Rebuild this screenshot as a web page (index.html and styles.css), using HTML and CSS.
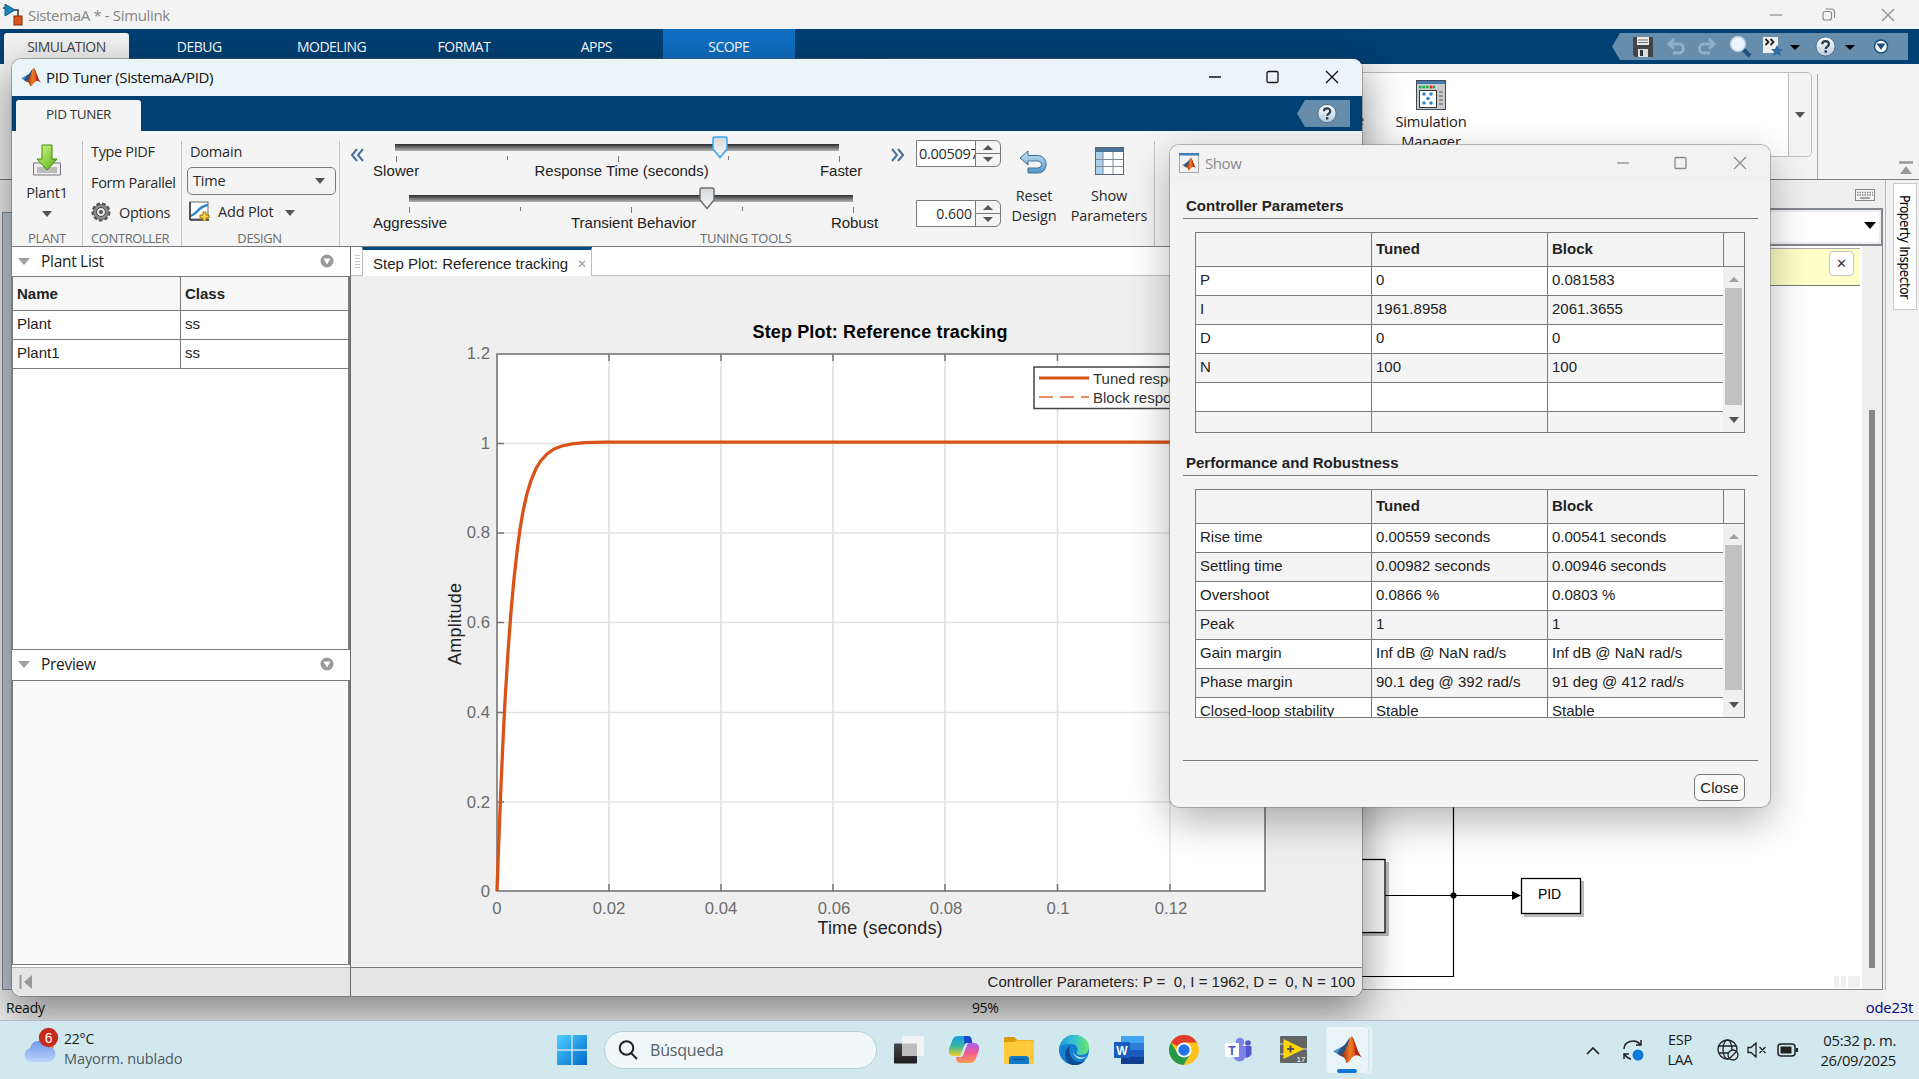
FILE: index.html
```html
<!DOCTYPE html>
<html lang="en">
<head>
<meta charset="utf-8">
<title>SistemaA * - Simulink</title>
<link rel="stylesheet" href="styles.css">
</head>
<body>
<svg class="defs" aria-hidden="true">
  <defs>
    <linearGradient id="flame" x1="0" y1="0" x2="1" y2="0"><stop offset="0" stop-color="#7a1a10"/><stop offset=".45" stop-color="#f07a20"/><stop offset="1" stop-color="#c02818"/></linearGradient>
    <linearGradient id="winblue" x1="0" y1="0" x2="1" y2="1"><stop offset="0" stop-color="#4fd0ff"/><stop offset="1" stop-color="#0068cc"/></linearGradient>
    <linearGradient id="track" x1="0" y1="0" x2="0" y2="1"><stop offset="0" stop-color="#2c2c2c"/><stop offset="1" stop-color="#b4b4b4"/></linearGradient>
    <linearGradient id="thumb" x1="0" y1="0" x2="0" y2="1"><stop offset="0" stop-color="#d4d6d8"/><stop offset="1" stop-color="#fafafa"/></linearGradient>
    <linearGradient id="green" x1="0" y1="0" x2="1" y2="1"><stop offset="0" stop-color="#d6ff8c"/><stop offset="1" stop-color="#58a818"/></linearGradient>
    <linearGradient id="undo" x1="0" y1="0" x2="0" y2="1"><stop offset="0" stop-color="#c8e6f6"/><stop offset="1" stop-color="#4f95c4"/></linearGradient>
    <linearGradient id="ball" x1="0" y1="0" x2="0" y2="1"><stop offset="0" stop-color="#fff"/><stop offset="1" stop-color="#b9cbdc"/></linearGradient>
    <linearGradient id="edge1" x1="0" y1="0" x2="1" y2="0"><stop offset="0" stop-color="#1d9de0"/><stop offset=".5" stop-color="#35c4cf"/><stop offset="1" stop-color="#6ae86a"/></linearGradient>
    <linearGradient id="cop" x1="0" y1="0" x2="0" y2="1"><stop offset="0" stop-color="#1a9fe8"/><stop offset=".5" stop-color="#35b6a0"/><stop offset="1" stop-color="#f0d020"/></linearGradient>
    <linearGradient id="cop2" x1="0" y1="0" x2="0" y2="1"><stop offset="0" stop-color="#a860f0"/><stop offset=".5" stop-color="#f05a90"/><stop offset="1" stop-color="#ff9a50"/></linearGradient>
    <linearGradient id="cloud" x1="0" y1="0" x2="0" y2="1"><stop offset="0" stop-color="#6f97ea"/><stop offset="1" stop-color="#bcd4fb"/></linearGradient>
    <linearGradient id="dark" x1="0" y1="0" x2="0" y2="1"><stop offset="0" stop-color="#484848"/><stop offset="1" stop-color="#1c1c1c"/></linearGradient>
    <symbol id="matlab" viewBox="0 0 32 32">
      <path d="M0 18 L9 13.500 L14 17 L8 23 Z" fill="#4a8fce"/>
      <path d="M9 13.500 C13 12 15 8 19 2 L16 14 L11 21 L8 23 L5 20.500 Z" fill="#27507e"/>
      <path d="M20.500 1 C24 5 26 18 32 25 C27 21 24 22 21 25 C18 29 17 30 14.500 31 C14 26 12 24 8 23 C14 20 16 8 20.500 1 Z" fill="url(#flame)"/>
      <path d="M21 1 C24 5 26 18 32 25 C29 22 26.500 21.500 24.500 22.500 C24 14 22.500 7 21 1 Z" fill="#b82a18"/>
    </symbol>
    <symbol id="help" viewBox="0 0 22 22"><circle cx="11" cy="11" r="10" fill="url(#ball)" stroke="#4e6f8c"/><path d="M7.600 8.600 C7.600 4.200 14.600 4.200 14.600 8.400 C14.600 11 11.400 11 11.200 13.600" fill="none" stroke="#2b3c50" stroke-width="2.400"/><rect x="9.900" y="15" width="2.600" height="2.600" fill="#2b3c50"/></symbol>
    <symbol id="arrowback" viewBox="0 0 28 24"><path d="M9 1 L1 8 L9 15 L9 11 L18 11 C24 11 24 18 18 18 L9 18 L9 23 L19 23 C30 23 30 5 18 5.500 L9 5.500 Z" fill="url(#undo)" stroke="#3d7098"/></symbol>
  </defs>
</svg>

<div class="desktop">

  <!-- Simulink main window -->
  <section class="simulink">
    <header class="sl-title">
      <svg class="sl-logo" viewBox="0 0 20 22"><path d="M0 4h3M10 6h5v6" fill="none" stroke="#333" stroke-width="1.500"/><path d="M2 0L12 6L2 12Z" fill="#1d83bd" stroke="#17628e"/><rect x="11" y="12" width="8" height="9" fill="#d9541e" stroke="#8a2c08"/></svg>
      <span>SistemaA * - Simulink</span>
      <svg class="sl-winbtns" viewBox="0 0 130 20" fill="none" stroke="#8a8a8a" stroke-width="1.200"><path d="M0 10h12"/><rect x="53" y="6.500" width="8.500" height="8.500" rx="2"/><path d="M55.500 4h6a3 3 0 0 1 3 3v6"/><path d="M112 4l12 12M124 4l-12 12"/></svg>
    </header>
    <nav class="sl-tabs">
      <span class="sl-tab active">SIMULATION</span><span class="sl-tab">DEBUG</span><span class="sl-tab">MODELING</span><span class="sl-tab">FORMAT</span><span class="sl-tab">APPS</span><span class="sl-tab scope">SCOPE</span>
      <svg class="quick" viewBox="0 0 296 27">
        <path d="M8 0H296V27H8L0 13.500Z" fill="#678dad"/>
        <g transform="translate(21 4)"><path d="M0 0h20v20h-18l-2-2z" fill="#444"/><rect x="4" y="0" width="12" height="8" fill="#e9e9e9"/><path d="M5 3h10M5 5.500h10" stroke="#777"/><rect x="5" y="12" width="10" height="8" fill="#ddd"/><rect x="7" y="13" width="3" height="6" fill="#333"/></g>
        <g fill="none" stroke="#8fb0cb" stroke-width="3"><path d="M57 11h10a4 4 0 0 1 0 9h-6M62 6l-5 5 5 5"/><path d="M102 11h-10a4 4 0 0 0 0 9h6M97 6l5 5-5 5"/></g>
        <path d="M130 15l8 8" stroke="#1f4f7e" stroke-width="4"/><circle cx="126" cy="11" r="7.500" fill="#eaf5fd" stroke="#b4cbdc" stroke-width="1.500"/>
        <rect x="151" y="4" width="15" height="16" fill="#f0f0f0"/><path d="M153.500 6l3 3-3 3M158.500 6l3 3-3 3" stroke="#222" stroke-width="1.800" fill="none"/><path d="M165 12l2 4h4l-3 3 1 4-4-2-4 2 1-4-3-3h4z" fill="#2f6ca6"/>
        <path d="M178 12h10l-5 5zM233 12h10l-5 5z" fill="#000"/>
        <use href="#help" x="203" y="3" width="21" height="21"/>
        <circle cx="269" cy="13.500" r="6.500" fill="#fff" stroke="#164f80" stroke-width="1.500"/><path d="M264.500 10.500h9l-4.500 6.500z" fill="#164f80"/>
      </svg>
    </nav>
    <div class="sl-strip">
      <div class="gallery">
        <span class="gallery-prev">e</span>
        <div class="simman">
          <svg viewBox="0 0 30 30" width="30" height="30"><rect x=".5" y=".5" width="29" height="29" fill="#c9ccce" stroke="#3c4a58"/><rect x="1" y="1" width="28" height="3" fill="#4577a8"/><path d="M3 7h16" stroke="#10b43c" stroke-width="2.500" stroke-dasharray="2.500 1"/><path d="M14 7h2.500" stroke="#f02020" stroke-width="2.500"/><rect x="3.500" y="10.500" width="17" height="17" fill="#fff" stroke="#333"/><g fill="#2c86c8"><circle cx="8" cy="14" r="1.800"/><circle cx="15" cy="14" r="1.800"/><circle cx="12" cy="18.500" r="1.800"/><circle cx="8" cy="23" r="1.800"/><circle cx="15" cy="23" r="1.800"/></g><path d="M23 12h4M23 16h4M23 20h4M23 24h4" stroke="#555"/></svg>
          <span>Simulation<br>Manager</span>
        </div>
        <span class="gallery-more"><i class="caret"></i></span>
      </div>
      <div class="strip-tail"><svg viewBox="0 0 14 14" width="14" height="14"><path d="M0 1.500h14" stroke="#999" stroke-width="2.500"/><path d="M7 5l6 8H1z" fill="#999"/></svg></div>
    </div>
    <div class="sl-body">
      <div class="sl-left"></div>
      <div class="sl-editor">
        <div class="kbd"><svg viewBox="0 0 20 12" width="20" height="12"><rect x=".5" y=".5" width="19" height="11" fill="#f4f4f4" stroke="#888"/><path d="M2 3.500h16M2 6h16" stroke="#888" stroke-width="1.500" stroke-dasharray="1.500 1"/><path d="M5 9h10" stroke="#888" stroke-width="1.500"/></svg></div>
        <div class="combo"><i class="caret black"></i></div>
        <div class="canvas-row">
          <div class="canvas">
            <div class="notice"><button class="x">✕</button></div>
            <svg class="diagram" viewBox="1340 285 522 703" width="522" height="703">
              <g fill="#777" opacity=".5"><path d="M1340 932h48v3h-48zM1386 861h3v74h-3zM1524 913h60v3h-60zM1581 880h3v36h-3z"/></g>
              <rect x="1330" y="858.500" width="55" height="73" fill="#fff" stroke="#000" stroke-width="1.300"/>
              <rect x="1521.500" y="877.500" width="59" height="35" fill="#fff" stroke="#000" stroke-width="1.300"/>
              <path d="M1385 894.500H1514M1453.500 780V975.500H1340" fill="none" stroke="#000" stroke-width="1.200"/>
              <circle cx="1453.500" cy="894.500" r="3"/><path d="M1512 890l9 4.500-9 4.500z"/>
              <text x="1538" y="898" font-size="14" textLength="23">PID</text>
              <g fill="#f0f0f0"><path d="M1834 975h5v12h-5zM1841 975h5v12h-5zM1848 975h12v12h-12z"/></g>
            </svg>
          </div>
          <div class="vscroll"><span></span></div>
        </div>
      </div>
      <div class="sl-right"><span class="inspector">Property Inspector</span></div>
    </div>
    <footer class="sl-status"><span>Ready</span><span class="zoomlvl">95%</span><span class="solver">ode23t</span></footer>
  </section>

  <!-- PID Tuner window -->
  <section class="tuner">
    <header class="t-title">
      <svg width="20" height="22"><use href="#matlab" width="20" height="22"/></svg>
      <span>PID Tuner (SistemaA/PID)</span>
      <svg class="t-winbtns" viewBox="0 0 130 20" fill="none" stroke="#111" stroke-width="1.300"><path d="M0 10h12"/><rect x="58" y="4.500" width="11" height="11" rx="1.500"/><path d="M117 4l12 12M129 4l-12 12"/></svg>
    </header>
    <nav class="t-tabs"><span>PID TUNER</span>
      <svg viewBox="0 0 53 27" width="53" height="27"><path d="M8 0H53V27H8L0 13.500Z" fill="#678dad"/><use href="#help" x="20" y="3" width="20" height="21"/></svg>
    </nav>
    <div class="toolstrip">
      <div class="grp plant">
        <svg viewBox="0 0 28 32" width="28" height="32"><path d="M.5 19h27v12H.5z" fill="#eee" stroke="#777"/><rect x="4" y="23" width="20" height="6" fill="#bbb"/><path d="M9 1h10v14h5L14 26 4 15h5z" fill="url(#green)" stroke="#3f8a10"/></svg>
        <span>Plant1</span><i class="caret"></i><em>PLANT</em>
      </div>
      <div class="grp ctrl">
        <span>Type PIDF</span><span>Form Parallel</span>
        <span class="opt"><svg viewBox="0 0 20 20" width="20" height="20"><circle cx="10" cy="10" r="8" fill="#777" stroke="#555" stroke-width="3" stroke-dasharray="3.500 2"/><circle cx="10" cy="10" r="7" fill="#8c8c8c"/><circle cx="10" cy="10" r="4.500" fill="#e8e8e8" stroke="#444"/><circle cx="10" cy="10" r="2" fill="#555"/></svg>Options</span>
        <em>CONTROLLER</em>
      </div>
      <div class="grp design">
        <span>Domain</span><span class="select">Time<i class="caret"></i></span>
        <span class="opt"><svg viewBox="0 0 21 20" width="21" height="20"><rect x="1" y="1" width="18" height="17" fill="#fff" stroke="#666"/><path d="M1 15C8 14 9 5 19 4" fill="none" stroke="#2b86c8" stroke-width="2.500"/><path d="M1 19h19M1 1v18" stroke="#333" stroke-width="1.500"/><path d="M14 11h3v3h3v3h-3v3h-3v-3h-3v-3h3z" fill="#ffd23c" stroke="#9a7412"/></svg>Add Plot<i class="caret"></i></span>
        <em>DESIGN</em>
      </div>
      <div class="grp tuning">
        <svg viewBox="341 131 575 114" width="575" height="114" class="sliders">
          <g fill="none" stroke="#46719c" stroke-width="2"><path d="M358 149l-5 6 5 6M364 149l-5 6 5 6M893 149l5 6-5 6M899 149l5 6-5 6"/></g>
          <rect x="396" y="144" width="444" height="7" fill="url(#track)"/><rect x="410" y="195" width="444" height="7" fill="url(#track)"/>
          <path d="M397.500 156v6M508.500 156v4M619.500 156v6M729.500 156v4M840.500 156v6M410.500 207v6M521.500 207v4M632.500 207v6M743.500 207v4M854.500 207v6" stroke="#777"/>
          <path d="M716 137h10q2 0 2 2v10l-7 8.500-7-8.500v-10q0-2 2-2z" fill="url(#thumb)" stroke="#34a4f4" stroke-width="1.500"/>
          <path d="M703 188h10q2 0 2 2v10l-7 8.500-7-8.500v-10q0-2 2-2z" fill="url(#thumb)" stroke="#6c7074" stroke-width="1.500"/>
          <g class="sl-lab"><text x="374" y="176" textLength="46">Slower</text><text x="535.500" y="176" textLength="174">Response Time (seconds)</text><text x="821" y="176" textLength="42">Faster</text>
          <text x="374" y="228" textLength="74">Aggressive</text><text x="572" y="228" textLength="125">Transient Behavior</text><text x="832" y="228" textLength="47">Robust</text></g>
        </svg>
        <div class="spins"><div class="spin"><b>0.005097</b><i></i></div><div class="spin r"><b>0.600</b><i></i></div></div>
        <div class="big"><svg width="30" height="25"><use href="#arrowback" width="28" height="24"/></svg><span>Reset<br>Design</span></div>
        <div class="big show"><svg viewBox="0 0 29 28" width="29" height="28"><rect x=".5" y=".5" width="28" height="27" fill="#fff" stroke="#5a6672"/><rect x="1" y="1" width="27" height="4" fill="#4c7298"/><rect x="1" y="5" width="7" height="22" fill="#a9d2ee"/><path d="M1 12.500h27M1 19.500h27M8 5v22M18 5v22" stroke="#7d8790"/></svg><span>Show<br>Parameters</span></div>
        <em class="tt">TUNING TOOLS</em>
      </div>
    </div>
    <div class="t-body">
      <aside class="side">
        <h2><i class="tri"></i>Plant List<svg viewBox="0 0 14 14" width="14" height="14"><circle cx="7" cy="7" r="6.500" fill="#999"/><path d="M3.500 4.500h7L7 10.500z" fill="#fff"/></svg></h2>
        <div class="plants">
          <div class="prow head"><span>Name</span><span>Class</span></div>
          <div class="prow"><span>Plant</span><span>ss</span></div>
          <div class="prow"><span>Plant1</span><span>ss</span></div>
        </div>
        <h2><i class="tri"></i>Preview<svg viewBox="0 0 14 14" width="14" height="14"><circle cx="7" cy="7" r="6.500" fill="#999"/><path d="M3.500 4.500h7L7 10.500z" fill="#fff"/></svg></h2>
        <div class="preview"></div>
        <div class="side-status"><svg viewBox="0 0 14 14" width="14" height="14"><path d="M1.500 0v14" stroke="#999" stroke-width="2"/><path d="M13 0v14L5 7z" fill="#999"/></svg></div>
      </aside>
      <main class="doc">
        <div class="doctabs"><i class="grip"></i><span>Step Plot: Reference tracking<b>✕</b></span></div>
        <svg class="plot" viewBox="351 276 1011 691" width="1011" height="691">
          <rect x="497" y="354" width="768" height="537" fill="#fff"/>
          <path d="M609 354V891M721 354V891M833 354V891M945 354V891M1057.500 354V891M1170 354V891M497 443.500H1265M497 533H1265M497 622.500H1265M497 712.500H1265M497 802H1265" stroke="#e2e2e2" stroke-width="1.600"/>
          <rect x="497" y="354" width="768" height="537" fill="none" stroke="#767676" stroke-width="1.600"/>
          <path d="M609 884v7M721 884v7M833 884v7M945 884v7M1057.500 884v7M1170 884v7M609 354v7M721 354v7M833 354v7M945 354v7M1057.500 354v7M497 443.500h7M497 533h7M497 622.500h7M497 712.500h7M497 802h7" stroke="#767676" stroke-width="1.500"/>
          <path d="M497 891L499 836L501 785.800L503 740.700L505 701L508 652L511 611.800L514 578.800L517 551.900L520 529.300L523 511.500L527 493.500L531 480.600L536 468.500L541 460.500L547 454L554 449L562 446L572 443.800L585 442.600L605 442.200H1265" fill="none" stroke="#d95319" stroke-width="3.300" stroke-linejoin="round"/>
          <text x="752.500" y="338" font-size="18" font-weight="700" textLength="255">Step Plot: Reference tracking</text>
          <g class="ticks"><text x="490" y="359">1.2</text><text x="490" y="449">1</text><text x="490" y="538">0.8</text><text x="490" y="628">0.6</text><text x="490" y="718">0.4</text><text x="490" y="808">0.2</text><text x="490" y="897">0</text></g>
          <g class="ticks mid"><text x="497" y="914">0</text><text x="609" y="914">0.02</text><text x="721" y="914">0.04</text><text x="834" y="914">0.06</text><text x="946" y="914">0.08</text><text x="1058" y="914">0.1</text><text x="1171" y="914">0.12</text></g>
          <text x="817.500" y="934" font-size="18" textLength="125" fill="#222">Time (seconds)</text>
          <text transform="translate(461 665) rotate(-90)" font-size="18" textLength="82" fill="#222">Amplitude</text>
          <rect x="1034" y="367" width="170" height="41.500" fill="#fff" stroke="#444" stroke-width="1.500"/>
          <path d="M1039 378H1089" stroke="#d95319" stroke-width="3"/><path d="M1039 397H1089" stroke="#e98c66" stroke-width="2" stroke-dasharray="14 7"/>
          <text x="1093" y="384" font-size="15" fill="#333">Tuned response</text><text x="1093" y="403" font-size="15" fill="#333">Block response</text>
        </svg>
        <div class="doc-status">Controller Parameters: P =&nbsp; 0, I = 1962, D =&nbsp; 0, N = 100</div>
      </main>
    </div>
  </section>

  <!-- Show parameters dialog -->
  <section class="dialog">
    <header class="d-title">
      <svg viewBox="0 0 20 20" width="20" height="20"><rect x=".5" y=".5" width="19" height="19" fill="#f2f2f2" stroke="#a8a8a8"/><rect width="20" height="2.500" fill="#3f7db5"/><use href="#matlab" x="3" y="4" width="14" height="14"/></svg>
      <span>Show</span>
      <svg class="d-winbtns" viewBox="0 0 130 20" fill="none" stroke="#8a8a8a" stroke-width="1.300"><path d="M0 10h12"/><rect x="58" y="4.500" width="11" height="11" rx="1"/><path d="M117 4l12 12M129 4l-12 12"/></svg>
    </header>
    <h3>Controller Parameters</h3>
    <div class="grid g1">
      <div class="gr gh"><span></span><span>Tuned</span><span>Block</span><span></span></div>
      <div class="gbody">
        <div class="rows">
          <div class="gr"><span>P</span><span>0</span><span>0.081583</span></div>
          <div class="gr"><span>I</span><span>1961.8958</span><span>2061.3655</span></div>
          <div class="gr"><span>D</span><span>0</span><span>0</span></div>
          <div class="gr"><span>N</span><span>100</span><span>100</span></div>
          <div class="gr"><span></span><span></span><span></span></div>
          <div class="gr"><span></span><span></span><span></span></div>
        </div>
        <div class="sb"><i class="up"></i><b></b><i class="caret dn"></i></div>
      </div>
    </div>
    <h3 class="second">Performance and Robustness</h3>
    <div class="grid g2">
      <div class="gr gh"><span></span><span>Tuned</span><span>Block</span><span></span></div>
      <div class="gbody">
        <div class="rows">
          <div class="gr"><span>Rise time</span><span>0.00559 seconds</span><span>0.00541 seconds</span></div>
          <div class="gr"><span>Settling time</span><span>0.00982 seconds</span><span>0.00946 seconds</span></div>
          <div class="gr"><span>Overshoot</span><span>0.0866 %</span><span>0.0803 %</span></div>
          <div class="gr"><span>Peak</span><span>1</span><span>1</span></div>
          <div class="gr"><span>Gain margin</span><span>Inf dB @ NaN rad/s</span><span>Inf dB @ NaN rad/s</span></div>
          <div class="gr"><span>Phase margin</span><span>90.1 deg @ 392 rad/s</span><span>91 deg @ 412 rad/s</span></div>
          <div class="gr"><span>Closed-loop stability</span><span>Stable</span><span>Stable</span></div>
        </div>
        <div class="sb"><i class="up"></i><b></b><i class="caret dn"></i></div>
      </div>
    </div>
    <div class="d-foot"><button>Close</button></div>
  </section>

  <!-- Taskbar -->
  <footer class="taskbar">
    <div class="weather">
      <svg viewBox="0 0 40 40" width="40" height="40"><circle cx="24" cy="18" r="8" fill="#f5811f"/><path d="M9 35a7 7 0 0 1-1-13.800a9 9 0 0 1 17-2a7.500 7.500 0 0 1 1 15.800z" fill="url(#cloud)"/><circle cx="26.500" cy="10.500" r="9.700" fill="#c42b1c"/><text x="26.500" y="15.500" font-size="14" fill="#fff" text-anchor="middle">6</text></svg>
      <p>22°C<br><span>Mayorm. nublado</span></p>
    </div>
    <div class="apps">
      <svg viewBox="0 0 30 30" width="30" height="30"><path d="M0 0h14.300v14.300H0zM15.700 0H30v14.300H15.700zM0 15.700h14.300V30H0zM15.700 15.700H30V30H15.700z" fill="url(#winblue)"/></svg>
      <div class="search"><svg viewBox="0 0 20 20" width="20" height="20" fill="none" stroke="#222" stroke-width="2"><circle cx="8.500" cy="8" r="6.800"/><path d="M13 13l6 6"/></svg>Búsqueda</div>
      <svg viewBox="0 0 30 30" width="30" height="30"><rect x="0" y="8.500" width="23" height="20" rx="1" fill="url(#dark)"/><rect x="8" y="1" width="22" height="20" rx="1" fill="#f3f3f3"/><rect x="8" y="8.500" width="15" height="12.500" fill="#bdbdbd"/></svg>
      <svg viewBox="0 0 30 30" width="30" height="30"><path d="M9 1h10c2 0 3 1 3.500 3l.5 3h-4c-2 0-3 1-3.500 3L12 19c-.5 1.500-1 2-3 2H5c-4 0-6-3-5-7L3 6c1-3.500 3-5 6-5z" fill="url(#cop)"/><path d="M15 1h4c2 0 3 1 3.500 3l.8 4H19c-2 0-3 .6-3.500 2z" fill="#1a49cf"/><path d="M21 28H11c-2 0-3-1-3.500-3L7 22h4c2 0 3-1 3.500-3L18 10c.5-1.500 1-2 3-2h4c4 0 6 3 5 7l-3 8c-1 3.500-3 5-6 5z" fill="url(#cop2)"/></svg>
      <svg viewBox="0 0 30 30" width="30" height="30"><path d="M0 4q0-2 2-2h8l3 3h15q2 0 2 2v4H0z" fill="#d99a0c"/><rect y="5.500" width="30" height="23.500" rx="2" fill="#ffc93c"/><path d="M0 4q0-2 2-2h8l3 3-3 2H0z" fill="#d99a0c"/><path d="M5 29v-5q0-3 3-3h14q3 0 3 3v5z" fill="#1279c6"/><path d="M9 24.500h12" stroke="#0b4f8a" stroke-width="1.200"/></svg>
      <svg viewBox="0 0 30 30" width="30" height="30"><circle cx="15" cy="15" r="15" fill="#1680d0"/><path d="M.5 12C3 3 9 0 15 0c9 0 15 6 15 12c0 6-4 8-9 8c-3 0-4-1.500-3-3c2-3 0-8-6-8C7 9 2 10 .5 12z" fill="url(#edge1)"/><path d="M11 11c-2 6 0 12 5 15c4 2 8 1 10.500-1C23 30 16 31 12 29.500C5 27 4 15 11 11z" fill="#0c4a94"/><path d="M14.500 14c-1 2.500 0 5 3 7c4 2 7 1.500 10.500.5c-4 3-8.500 3-11 .5c-2.500-2-3.500-5-2.500-8z" fill="#d1e8ee"/></svg>
      <svg viewBox="0 0 30 30" width="30" height="30"><path d="M7 1h22q1 0 1 1v7H7z" fill="#41a5ee"/><path d="M7 8h23v7H7z" fill="#2b7cd3"/><path d="M7 15h23v7H7z" fill="#185abd"/><path d="M7 22h23v6q0 1-1 1H7z" fill="#103f91"/><rect y="7" width="16" height="16" rx="1" fill="#185abd"/><text x="8" y="19.500" font-size="12" font-weight="700" fill="#fff" text-anchor="middle">W</text></svg>
      <svg viewBox="0 0 30 30" width="30" height="30"><circle cx="15" cy="15" r="15" fill="#fcc31e"/><path d="M15 15L2 7.500A15 15 0 0 1 28 7.500H15z" fill="#e33b2e"/><path d="M2 7.500A15 15 0 0 0 14.500 30L21.500 18.500 8.500 18.500z" fill="#229b48"/><circle cx="15" cy="15" r="7.500" fill="#fff"/><circle cx="15" cy="15" r="5.700" fill="#2374e8"/></svg>
      <svg viewBox="0 0 30 30" width="30" height="30"><circle cx="16" cy="7" r="4.300" fill="#7b83eb"/><circle cx="24" cy="8" r="2.800" fill="#5059c9"/><path d="M19 11h8.500v8a5 5 0 0 1-8.500 2z" fill="#5059c9"/><path d="M9 11h13v9a6.500 6.500 0 0 1-13 0z" fill="#7b83eb"/><rect x="1" y="8" width="14" height="14" fill="#fff"/><text x="8" y="19.500" font-size="12" font-weight="700" fill="#4b53bc" text-anchor="middle">T</text></svg>
      <svg viewBox="0 0 30 30" width="30" height="30"><rect x="1" y="1" width="27" height="27" rx="1" fill="#636466"/><path d="M0 9h6M0 19h6M22 14h8" stroke="#ddd"/><path d="M4.500 4L25 14 4.500 24z" fill="#ffd400"/><path d="M8 14h7M11.500 10.500v7" stroke="#555" stroke-width="2.200"/><text x="22" y="26.500" font-size="8" fill="#fff" text-anchor="middle">17</text></svg>
      <div class="tile"><svg width="31" height="29"><use href="#matlab" width="31" height="29"/></svg><i></i></div>
    </div>
    <div class="tray">
      <svg viewBox="0 0 14 9" width="14" height="9" fill="none" stroke="#222" stroke-width="1.700"><path d="M1 8l6-6 6 6"/></svg>
      <svg class="sync" viewBox="0 0 22 22" width="22" height="22" fill="none" stroke="#222" stroke-width="1.500"><path d="M2 10A9 8 0 0 1 18 5M19 1v5h-5M2 20v-5h5M3 16a9 8 0 0 0 6 4"/><circle cx="16" cy="16" r="5.500" fill="#0a78d7" stroke="none"/></svg>
      <p class="lang">ESP<br>LAA</p>
      <svg class="net" viewBox="0 0 22 22" width="22" height="22" fill="none" stroke="#222" stroke-width="1.300"><circle cx="10.500" cy="10.500" r="9.500"/><ellipse cx="10.500" cy="10.500" rx="4.500" ry="9.500"/><path d="M2 7h17M2 14h9"/><circle cx="16" cy="16" r="5" fill="#d1e8ee"/><path d="M13 19l6-6"/></svg>
      <svg class="mute" viewBox="0 0 20 16" width="20" height="16" fill="none" stroke="#222" stroke-width="1.300"><path d="M1 5.500h3l5-4.500v14l-5-4.500H1zM12.500 5l6 6M18.500 5l-6 6"/></svg>
      <svg class="bat" viewBox="0 0 22 14" width="22" height="14"><rect x="1" y="1" width="17" height="12" rx="3" fill="none" stroke="#222" stroke-width="1.500"/><rect x="3.500" y="3.500" width="11" height="7" fill="#222"/><path d="M19 5h2v4h-2z" fill="#222"/></svg>
      <p class="clock">05:32 p. m.<br>26/09/2025</p>
    </div>
  </footer>
</div>
</body>
</html>
```
FILE: styles.css
```css
* { box-sizing: border-box; }
body { margin: 0; font-family: "Open Sans", "Noto Sans", sans-serif; font-size: 14px; color: #222; overflow: hidden; }
p, h2, h3 { margin: 0; font-weight: 400; }
svg { display: block; flex: none; }
svg text { font-family: "Liberation Sans", Arial, sans-serif; }
.defs { position: absolute; width: 0; height: 0; }
.desktop { position: relative; width: 1919px; height: 1079px; overflow: hidden; background: #efefef; }
.caret { display: block; width: 0; height: 0; border: 5px solid transparent; border-top: 6px solid #555; border-bottom: 0; }
.caret.black { border-width: 6px; border-bottom: 0; border-top: 7px solid #000; }

/* Simulink */
.simulink { display: flex; flex-direction: column; height: 1021px; }
.sl-title { display: flex; align-items: center; height: 29px; background: #f3f3f3; color: #868686; padding-left: 3px; gap: 5px; font-size: 15px; letter-spacing: -.35px; }
.sl-logo { width: 20px; height: 22px; }
.sl-winbtns { width: 130px; height: 20px; margin-left: auto; margin-right: 19px; }
.sl-tabs { display: flex; height: 35px; background: #004073; color: #fff; padding-right: 11px; }
.sl-tab { width: 132.400px; text-align: center; line-height: 36px; font-size: 14px; letter-spacing: -.5px; }
.sl-tab.active { width: 125px; margin: 4px 4px 0; line-height: 28px; border-radius: 3px 3px 0 0; background: #f2f2f2; color: #444; }
.sl-tab.scope { background: #0f6ec2; }
.quick { width: 296px; height: 27px; margin: 4px 0 0 auto; }
.sl-strip { display: flex; height: 116px; background: #f4f4f4; border-bottom: 1px solid #7d7d7d; }
.gallery { display: flex; width: 1792px; height: 85px; margin: 8px 0 0 20px; border: 1px solid #bdbdbd; border-radius: 5px; background: #fff; }
.gallery-prev { margin-left: 1334px; padding-top: 37px; width: 9px; text-align: right; }
.simman { display: flex; flex-direction: column; align-items: center; width: 134px; padding-top: 7px; text-align: center; font-size: 14.700px; line-height: 20px; letter-spacing: -.2px; gap: 1px; }
.gallery-more { display: flex; align-items: center; justify-content: center; width: 23px; margin-left: auto; border-left: 1px solid #bdbdbd; background: #f4f4f4; border-radius: 0 5px 5px 0; }
.strip-tail { flex: 1; margin: 10px 0 0 5px; border-left: 1px solid #aaa; display: flex; align-items: flex-end; justify-content: flex-end; padding: 0 6px 4px 0; }
.sl-body { display: flex; flex: 1; }
.sl-left { width: 12px; margin: 32px 0 31px 2px; background: #c3cbd4; border: 1px solid #7c8894; }
.sl-editor { flex: 1; margin-bottom: 31px; display: flex; flex-direction: column; border-right: 1px solid #b4b8bc; padding-right: 2px; }
.kbd { height: 28px; display: flex; justify-content: flex-end; padding: 9px 8px 0 0; }
.combo { height: 38px; border: 2px solid #84888f; border-left: 0; background: #fff; display: flex; align-items: center; justify-content: flex-end; padding: 0 5px 3px 0; box-shadow: inset 0 0 0 2px #eee; }
.canvas-row { display: flex; flex: 1; border: solid #84888f; border-width: 0 1px 1px 0; }
.canvas { flex: 1; background: #fff; display: flex; flex-direction: column; align-items: flex-end; padding-top: 2px; }
.notice { width: calc(100% - 2px); margin-right: 2px; height: 38px; background: #ffffc8; border-bottom: 1px solid #777; display: flex; justify-content: flex-end; padding: 2px 6px; border-top: 1px solid #aaa; }
.notice .x { width: 25px; height: 25px; padding: 0; border: 1px solid #c4c4c4; border-radius: 4px; background: #fff; font: bold 13px "DejaVu Sans", sans-serif; color: #333; }
.vscroll { width: 20px; background: #efefef; padding: 164px 7px 0; }
.vscroll span { display: block; width: 6px; height: 558px; background: #868686; }
.sl-right { width: 33px; padding: 3px 2px 0 7px; background: #f1f1f1; }
.inspector { display: block; height: 127px; background: #fff; border: 1px solid #c9c9c9; writing-mode: vertical-rl; text-align: center; font: 13.500px/22px "DejaVu Sans Condensed", "DejaVu Sans", sans-serif; letter-spacing: -.45px; color: #000; white-space: nowrap; }
.sl-status { position: absolute; top: 990px; width: 1919px; display: flex; height: 31px; padding: 4px 6px 0; line-height: 27px; color: #111; letter-spacing: -.2px; }
.zoomlvl { margin-left: 927px; letter-spacing: -.3px; }
.solver { margin-left: auto; color: #000080; font-size: 14.800px; }

/* PID Tuner */
.tuner { position: absolute; left: 12px; top: 59px; width: 1350px; height: 937px; display: flex; flex-direction: column; border-radius: 9px; overflow: hidden; background: #f4f4f4; box-shadow: 0 0 0 1px rgba(90,90,90,.45), 0 16px 40px 4px rgba(0,0,0,.42); }
.t-title { display: flex; align-items: center; height: 37px; padding: 0 0 1px 9px; gap: 5px; background: linear-gradient(90deg, #eaf5f8, #ecf4fb); color: #111; font-size: 15px; letter-spacing: -.38px; }
.t-winbtns { width: 130px; height: 20px; margin-left: auto; margin-right: 23px; }
.t-tabs { display: flex; justify-content: space-between; height: 35px; padding: 4px 12px 0 4px; background: #004073; }
.t-tabs span { width: 125px; background: #f4f4f4; text-align: center; line-height: 28px; border-radius: 3px 3px 0 0; letter-spacing: -.4px; color: #333; font-size: 13.500px; }
.toolstrip { display: flex; height: 116px; border-bottom: 1px solid #7a7a7a; font-size: 14.500px; letter-spacing: -.2px; color: #2a2a2a; }
.grp { display: flex; flex-direction: column; position: relative; padding-top: 11px; }
.grp em { font-style: normal; font-size: 13px; color: #6c6c6c; letter-spacing: -.4px; line-height: 16px; margin-top: auto; text-align: center; }
.plant, .ctrl, .design { border-right: 1px solid #c4c4c4; margin-top: 10px; padding-top: 0; }
.plant { width: 71px; align-items: center; padding-top: 3px; }
.plant span { margin: 6px 0 7px; line-height: 22px; }
.ctrl { width: 99px; padding-left: 8px; white-space: nowrap; }
.ctrl em { text-align: left; }
.ctrl > span, .design > span { line-height: 22px; height: 31px; }
.ctrl .opt, .design .opt { display: flex; gap: 8px; align-items: flex-start; height: 24px; margin-top: -1px; }
.ctrl span { letter-spacing: -.35px; }
.design { width: 158px; padding-left: 5px; padding-right: 4px; }
.design > span:first-child { padding-left: 3px; height: 26px; }
.design .select { display: flex; align-items: center; justify-content: space-between; height: 28px; width: 149px; border: 1px solid #7a7a7a; border-radius: 5px; padding: 0 10px 0 5px; margin-bottom: 7px; }
.design .opt { padding-left: 2px; }
.design .opt .caret { margin: 9px 0 0 4px; }
.design em { padding-right: 3px; }
.tuning { flex-direction: row; flex: 1; padding-top: 0; }
.sliders { width: 575px; margin-right: 1px; }
.sl-lab text { font-size: 15px; fill: #222; }
.spins { width: 85px; display: flex; flex-direction: column; gap: 33px; padding-top: 9px; }
.spin { display: flex; height: 27px; border: 1px solid #7a7a7a; border-radius: 0 6px 6px 0; overflow: hidden; }
.spin b { font-weight: 400; width: 58px; background: #fff; line-height: 26px; padding-left: 2px; overflow: hidden; letter-spacing: -.3px; font-size: 14.500px; }
.spin.r b { text-align: right; padding-right: 3px; letter-spacing: 0; font-size: 14px; }
.spin i { flex: 1; border-left: 1px solid #7a7a7a; background: linear-gradient(#7a7a7a, #7a7a7a) 0 12px/100% 1px no-repeat; display: flex; flex-direction: column; align-items: center; justify-content: space-between; padding: 4px 0; }
.spin i::before { content: ""; border: 5px solid transparent; border-bottom-color: #555; border-top: 0; }
.spin i::after { content: ""; border: 5px solid transparent; border-top-color: #555; border-bottom: 0; }
.big { width: 66px; display: flex; flex-direction: column; align-items: center; padding-top: 19px; text-align: center; line-height: 20px; gap: 11px; }
.big.show { width: 84px; padding-top: 16px; }
.tuning .tt { position: absolute; left: 360px; bottom: 0; letter-spacing: -.2px; }
.tuning::after { content: ""; width: 1px; margin: 10px 0 0 3px; background: #c4c4c4; }
.t-body { display: flex; flex: 1; min-height: 0; }
.side { width: 339px; display: flex; flex-direction: column; background: #fff; border-right: 1px solid #6c6c6c; }
.side h2 { display: flex; align-items: center; height: 29px; padding: 0 16px 0 6px; gap: 11px; font-size: 15.500px; letter-spacing: -.3px; }
.side h2 svg { margin-left: auto; }
.tri { border: 6.500px solid transparent; border-top: 7px solid #a0a0a0; border-bottom: 0; }
.plants { height: 375px; border: 1px solid #7a7a7a; border-right-width: 2px; font: 15px "Liberation Sans", Arial, sans-serif; }
.prow { display: grid; grid-template-columns: 168px 1fr; height: 29px; border-bottom: 1px solid #7a7a7a; }
.prow span { padding-left: 4px; line-height: 26px; }
.prow span:first-child { border-right: 1px solid #7a7a7a; }
.prow.head { height: 34px; font-weight: 700; background: #f7f7f7; }
.prow.head span { line-height: 33px; }
.preview { height: 286px; background: #fafafa; border: 1px solid #7a7a7a; border-right-width: 2px; margin-top: 1px; }
.side-status { flex: 1; margin-top: 2px; border-top: 1px solid #b4b4b4; background: #e6e6e6; padding: 7px 7px; }
.doc { flex: 1; display: flex; flex-direction: column; background: #efefef; font: 15px "Liberation Sans", Arial, sans-serif; }
.doctabs { display: flex; height: 29px; background: #fff; border-bottom: 1px solid #bcbcbc; }
.grip { width: 5px; height: 13px; margin: 8px 2px 0 4px; background: repeating-linear-gradient(#c4c4c4 0 1.500px, #fff 1.500px 3px); }
.doctabs span { display: flex; justify-content: space-between; width: 230px; height: 29px; border-top: 3px solid #004a85; border-right: 1px solid #bcbcbc; border-left: 1px solid #bcbcbc; background: #fff; padding: 0 4px 0 10px; line-height: 28px; color: #222; white-space: nowrap; }
.doctabs b { color: #a0a0a0; font: bold 12px/28px "DejaVu Sans", sans-serif; }
.ticks text { font-size: 16.700px; fill: #6c6c6c; text-anchor: end; }
.ticks.mid text { text-anchor: middle; }
.doc-status { flex: 1; border-top: 1px solid #7a7a7a; background: #e6e6e6; text-align: right; line-height: 28px; padding-right: 7px; color: #222; }

/* Dialog */
.dialog { position: absolute; left: 1170px; top: 145px; width: 600px; height: 662px; border-radius: 9px; background: #f4f4f4; box-shadow: 0 0 0 1px rgba(120,120,120,.5), 0 14px 40px rgba(0,0,0,.3); font: 15px "Liberation Sans", Arial, sans-serif; color: #222; }
.d-title { display: flex; align-items: center; height: 37px; padding: 0 0 1px 9px; gap: 6px; color: #8a8a8a; font: 15px "Open Sans", sans-serif; letter-spacing: -.4px; background: #f2f2f2; border-radius: 9px 9px 0 0; }
.d-winbtns { width: 130px; height: 20px; margin-left: auto; margin-right: 23px; }
.dialog h3 { margin: 12px 12px 0 13px; padding-left: 3px; height: 25px; line-height: 24px; border-bottom: 1px solid #7a7a7a; font-size: 15px; font-weight: 700; }
.dialog h3.second { margin-top: 18px; }
.grid { margin: 13px 25px 0; border: 1px solid #7a7a7a; overflow: hidden; display: flex; flex-direction: column; }
.g1 { height: 201px; }
.g2 { height: 229px; }
.gr { display: grid; grid-template-columns: 176px 176px 1fr; height: 29px; border-bottom: 1px solid #7a7a7a; background: #fff; flex: none; }
.gr:nth-child(even) { background: #f4f4f4; }
.gr span { padding-left: 4px; line-height: 25px; border-right: 1px solid #7a7a7a; white-space: nowrap; }
.gr span:last-child { border-right: 0; }
.gr.gh { grid-template-columns: 176px 176px 176px 1fr; height: 34px; background: #f4f4f4; font-weight: 700; }
.gr.gh span { line-height: 32px; }
.gbody { display: flex; flex: 1; min-height: 0; }
.rows { width: 527px; overflow: hidden; }
.sb { flex: 1; background: #f0f0f0; display: flex; flex-direction: column; align-items: center; }
.sb b { width: 17px; flex: 1; background: #c1c1c1; margin: 6px 0 12px; }
.up { margin-top: 10px; border: 5px solid transparent; border-bottom-color: #a0a0a0; border-top: 0; }
.dn { margin-bottom: 9px; }
.d-foot { margin: 42px 12px 0 13px; border-top: 1px solid #7a7a7a; padding: 13px 13px 0 0; display: flex; justify-content: flex-end; }
.d-foot button { width: 51px; height: 27px; padding: 0; font: 15px "Liberation Sans", Arial, sans-serif; color: #222; border: 1px solid #7a7a7a; border-radius: 6px; background: #f9f9f9; }

/* Taskbar */
.taskbar { position: absolute; left: 0; top: 1020px; width: 1919px; height: 59px; background: #d1e8ee; border-top: 1px solid #a9bec6; display: flex; color: #1a1a1a; }
.weather { display: flex; width: 557px; padding: 6px 0 0 22px; gap: 2px; line-height: 20px; letter-spacing: -.2px; }
.weather p { padding-top: 2px; }
.weather span { color: #4c5a60; font-size: 14.500px; letter-spacing: -.1px; }
.apps { display: flex; align-items: center; gap: 25px; }
.search { width: 273px; height: 38px; margin: 0 -8px; border: 1px solid #b9d0d8; border-radius: 19px; background: #eff7f9; display: flex; align-items: center; padding-left: 13px; gap: 12px; font-size: 16px; color: #55606a; letter-spacing: -.2px; }
.tile { position: relative; width: 44px; height: 48px; margin-left: -9px; border-radius: 5px; background: #e9f4f8; border: 1px solid #d3e2e9; box-shadow: 4px 0 0 #e2f0f5; display: flex; flex-direction: column; align-items: center; justify-content: space-between; padding: 8px 0 0; }
.tile i { width: 20px; height: 4px; border-radius: 2px; background: #0f78d4; }
.tray { display: flex; align-items: center; margin-left: auto; padding-right: 23px; line-height: 20px; text-align: center; letter-spacing: -.3px; }
.sync { margin-left: 22px; }
.lang { margin: 0 23px 0 22px; width: 28px; font-size: 14.500px; }
.mute { margin: 0 10px 0 8px; }
.clock { text-align: right; width: 97px; white-space: nowrap; font-size: 14.800px; letter-spacing: -.3px; }
```
